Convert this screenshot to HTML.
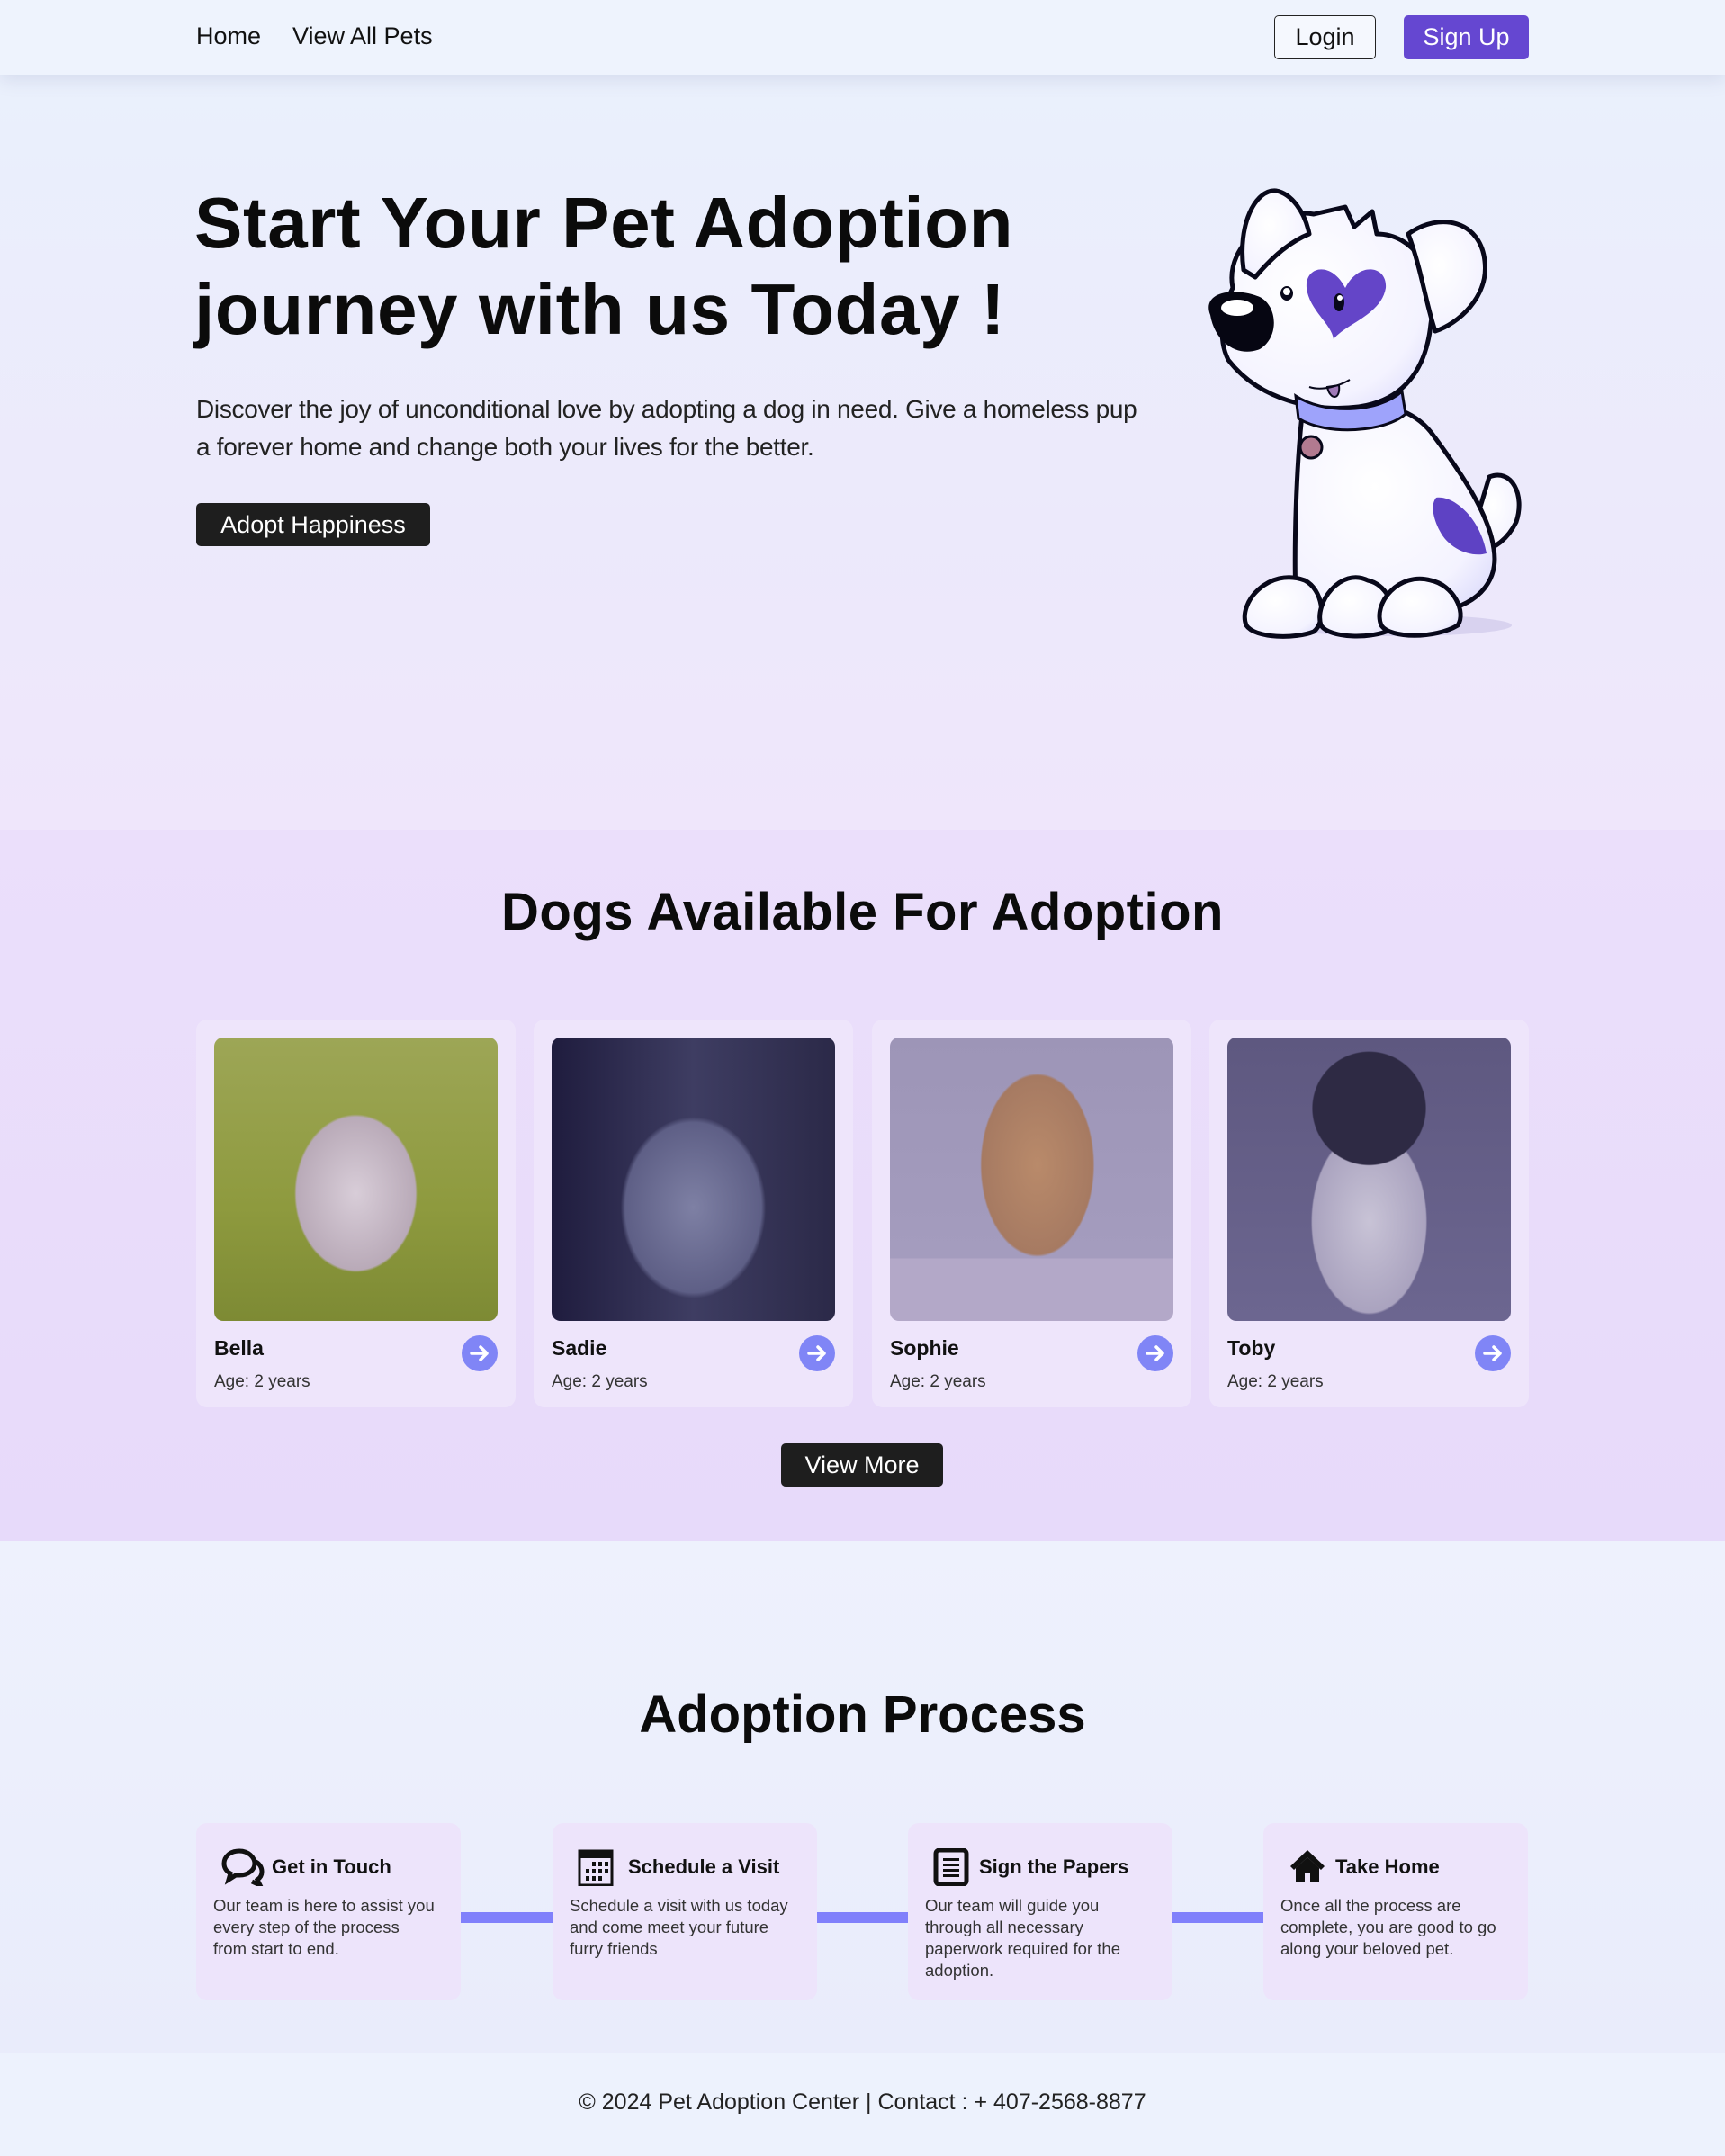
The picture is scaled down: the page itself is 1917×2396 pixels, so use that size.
<!DOCTYPE html>
<html><head><meta charset="utf-8">
<style>
*{box-sizing:border-box;margin:0;padding:0}
body{width:1917px;height:2396px;font-family:"Liberation Sans",sans-serif;color:#111;background:#ecf0fc;position:relative;overflow:hidden}
.abs{position:absolute}
nav{position:absolute;left:0;top:0;width:1917px;height:83px;background:#eef3fd;box-shadow:0 6px 18px rgba(120,130,170,.18);z-index:2}
nav a{position:absolute;top:25px;font-size:27px;color:#111;text-decoration:none}
.btn{position:absolute;border-radius:5px;font-size:27px;text-align:center}
.hero{position:absolute;left:0;top:83px;width:1917px;height:839px;background:linear-gradient(180deg,#eaf0fc 0%,#ece9fb 60%,#efe6fb 100%)}
h1{position:absolute;left:216px;top:200px;font-size:80px;line-height:96px;font-weight:bold;letter-spacing:0.6px;color:#0b0b0b}
.lead{position:absolute;left:218px;top:434px;font-size:28px;line-height:42px;color:#222;width:1060px;letter-spacing:-.3px}
.dark{background:#1e1e1e;color:#fff}
.sec2{position:absolute;left:0;top:922px;width:1917px;height:790px;background:linear-gradient(180deg,#ebdffb 0%,#e7dafa 100%)}
h2{position:absolute;width:1917px;text-align:center;font-size:58px;font-weight:bold;letter-spacing:0.5px;color:#0b0b0b}
.card{position:absolute;top:1133px;width:355px;height:431px;background:#eee5fb;border-radius:12px}
.img{position:absolute;left:20px;top:20px;width:315px;height:315px;border-radius:10px;overflow:hidden}
.name{position:absolute;left:20px;top:352px;font-size:23px;font-weight:bold}
.age{position:absolute;left:20px;top:392px;font-size:19px;color:#333}
.arr{position:absolute;left:295px;top:351px;width:40px;height:40px;border-radius:50%;background:#8085f6}
.step{position:absolute;top:2026px;width:294px;height:197px;background:#ede4fb;border-radius:12px}
.step h3{position:absolute;left:84px;top:36px;font-size:22px;font-weight:bold;color:#111}
.step p{position:absolute;left:19px;top:80px;width:246px;font-size:18.5px;line-height:24px;color:#333}
.line{position:absolute;top:2125px;height:12px;background:#8080fb}
.ic{position:absolute;left:28px;top:28px}
footer{position:absolute;left:0;top:2281px;width:1917px;height:115px;background:#edf2fd;text-align:center;font-size:25px;line-height:110px;color:#222}
</style></head><body>
<nav>
<a style="left:218px">Home</a><a style="left:325px">View All Pets</a>
<div class="btn" style="left:1416px;top:17px;width:113px;height:49px;border:1.5px solid #222;line-height:46px;color:#111;background:#f5f8fe">Login</div>
<div class="btn" style="left:1560px;top:17px;width:139px;height:49px;background:#6547d1;color:#fff;line-height:49px">Sign Up</div>
</nav>
<div class="hero"></div>
<h1>Start Your Pet Adoption<br>journey with us Today !</h1>
<div class="lead">Discover the joy of unconditional love by adopting a dog in need. Give a homeless pup a forever home and change both your lives for the better.</div>
<div class="btn dark" style="left:218px;top:559px;width:260px;height:48px;line-height:48px;font-size:27px">Adopt Happiness</div>

<svg class="abs" style="left:1300px;top:190px" width="420" height="540" viewBox="0 0 420 540">
<defs><radialGradient id="wg" cx=".4" cy=".4" r=".8"><stop offset="0" stop-color="#fff"/><stop offset=".7" stop-color="#f4f3ff"/><stop offset="1" stop-color="#d9d8fb"/></radialGradient></defs>
<ellipse cx="250" cy="505" rx="130" ry="12" fill="#c9c3e8" opacity=".6"/>
<g stroke="#08081a" stroke-width="5" stroke-linejoin="round" stroke-linecap="round" fill="url(#wg)">
<path d="M355 340 C380 330 395 360 385 390 C375 410 360 420 350 420 L340 390 Z"/>
<path d="M148 262 C140 330 138 420 140 480 L300 490 C350 480 365 450 360 420 C355 380 320 330 290 290 C270 265 240 258 200 258 Z"/>
<path d="M150 455 C110 440 75 480 85 505 C95 520 140 520 160 512 C175 500 170 465 150 455 Z"/>
<path d="M220 455 C190 440 160 480 168 505 C178 520 225 520 245 510 C255 495 245 460 220 455 Z"/>
<path d="M290 455 C255 445 225 480 235 505 C245 520 295 520 320 505 C330 490 315 460 290 455 Z"/>
<path d="M70 130 C60 80 120 40 160 48 L195 40 L205 62 L225 45 L230 70 C270 70 300 110 290 170 C285 220 260 255 210 262 C160 268 100 255 65 210 C55 190 55 160 70 130 Z"/>
<path d="M82 110 C75 60 95 20 118 22 C135 25 150 45 155 70 C130 80 110 100 95 118 Z"/>
<path d="M265 70 C300 45 345 55 350 100 C355 140 320 170 295 178 C285 150 280 110 265 70 Z"/>
</g>
<path d="M296 363 C315 360 345 385 352 425 C335 430 310 420 300 400 C292 385 290 370 296 363 Z" fill="#5e42c4"/>
<path d="M195 130 C180 100 150 105 152 130 C155 155 180 170 182 187 C195 170 235 160 240 130 C242 105 210 100 195 130 Z" fill="#6445c8"/>
<ellipse cx="188" cy="146" rx="6" ry="10" fill="#08081a"/><circle cx="189" cy="141" r="3" fill="#fff"/>
<ellipse cx="130" cy="136" rx="7" ry="8" fill="#08081a"/><circle cx="130" cy="134" r="4" fill="#fff"/>
<path d="M45 160 C35 135 70 128 100 140 C120 150 122 185 100 198 C75 208 50 190 45 160 Z" fill="#060612"/>
<ellipse cx="75" cy="152" rx="18" ry="9" fill="#fff"/>
<path d="M140 250 C170 270 230 270 258 245 L262 270 C240 290 175 295 143 275 Z" fill="#9ea3fb" stroke="#08081a" stroke-width="3"/>
<circle cx="157" cy="307" r="12" fill="#b27a90" stroke="#08081a" stroke-width="3"/>
<path d="M175 240 C178 255 190 255 188 238 Z" fill="#a07ab8" stroke="#08081a" stroke-width="2"/>
<path d="M155 240 C170 245 190 238 200 232" fill="none" stroke="#08081a" stroke-width="2"/>
</svg>

<div class="sec2"></div>
<h2 style="top:980px">Dogs Available For Adoption</h2>

<div class="card" style="left:218px"><div class="img" style="background:radial-gradient(ellipse 35% 45% at 50% 55%,#d8cdd8 0%,#b9aab8 60%,rgba(0,0,0,0) 62%),linear-gradient(180deg,#9da656 0%,#8e9a3e 60%,#7d8a34 100%)"></div><div class="name">Bella</div><div class="age">Age: 2 years</div><div class="arr"><svg width="40" height="40"><path d="M11 20h17M21 13l7 7-7 7" stroke="#fff" stroke-width="3.5" fill="none" stroke-linecap="round" stroke-linejoin="round"/></svg></div></div>
<div class="card" style="left:593px"><div class="img" style="background:radial-gradient(ellipse 40% 50% at 50% 60%,#7e80a4 0%,#5e5f86 60%,rgba(0,0,0,0) 64%),linear-gradient(90deg,#1f1c3e,#3e3d62 50%,#2b2948)"></div><div class="name">Sadie</div><div class="age">Age: 2 years</div><div class="arr"><svg width="40" height="40"><path d="M11 20h17M21 13l7 7-7 7" stroke="#fff" stroke-width="3.5" fill="none" stroke-linecap="round" stroke-linejoin="round"/></svg></div></div>
<div class="card" style="left:969px"><div class="img" style="background:linear-gradient(180deg,rgba(0,0,0,0) 78%,#b3a8c8 78%),radial-gradient(ellipse 28% 45% at 52% 45%,#b98a6a 0%,#a67a62 70%,rgba(0,0,0,0) 72%),linear-gradient(180deg,#9d95b7,#a69ec0)"></div><div class="name">Sophie</div><div class="age">Age: 2 years</div><div class="arr"><svg width="40" height="40"><path d="M11 20h17M21 13l7 7-7 7" stroke="#fff" stroke-width="3.5" fill="none" stroke-linecap="round" stroke-linejoin="round"/></svg></div></div>
<div class="card" style="left:1344px"><div class="img" style="background:radial-gradient(ellipse 22% 22% at 50% 25%,#2e2a44 0%,#2e2a44 90%,rgba(0,0,0,0) 92%),radial-gradient(ellipse 25% 40% at 50% 65%,#c8c3d6 0%,#aaa3bf 80%,rgba(0,0,0,0) 82%),linear-gradient(180deg,#5e5880,#6c6690)"></div><div class="name">Toby</div><div class="age">Age: 2 years</div><div class="arr"><svg width="40" height="40"><path d="M11 20h17M21 13l7 7-7 7" stroke="#fff" stroke-width="3.5" fill="none" stroke-linecap="round" stroke-linejoin="round"/></svg></div></div>

<div class="btn dark" style="left:868px;top:1604px;width:180px;height:48px;line-height:48px;font-size:27px">View More</div>

<div class="abs" style="left:0;top:1712px;width:1917px;height:569px;background:linear-gradient(180deg,#eef1fd,#e9ecfb)"></div>
<h2 style="top:1872px;letter-spacing:0">Adoption Process</h2>

<div class="line" style="left:512px;width:106px"></div>
<div class="line" style="left:908px;width:106px"></div>
<div class="line" style="left:1303px;width:106px"></div>

<div class="step" style="left:218px">
<svg class="ic" width="48" height="42" viewBox="0 0 48 42"><path d="M20 3C10 3 3 9 3 17c0 5 3 9 7 11l-2 7 8-5h4c10 0 17-6 17-13S30 3 20 3z" fill="none" stroke="#111" stroke-width="5"/><path d="M36 14c6 2 9 7 9 12 0 4-2 7-5 9l3 6-9-4" fill="none" stroke="#111" stroke-width="5"/></svg>
<h3>Get in Touch</h3><p>Our team is here to assist you every step of the process from start to end.</p></div>
<div class="step" style="left:614px">
<svg class="ic" width="40" height="42" viewBox="0 0 40 42"><rect x="2" y="3" width="36" height="38" fill="none" stroke="#111" stroke-width="3"/><rect x="2" y="3" width="36" height="8" fill="#111"/><g fill="#111"><rect x="16" y="15" width="4" height="5"/><rect x="23" y="15" width="4" height="5"/><rect x="30" y="15" width="4" height="5"/><rect x="9" y="23" width="4" height="5"/><rect x="16" y="23" width="4" height="5"/><rect x="23" y="23" width="4" height="5"/><rect x="30" y="23" width="4" height="5"/><rect x="9" y="31" width="4" height="5"/><rect x="16" y="31" width="4" height="5"/><rect x="23" y="31" width="4" height="5"/></g></svg>
<h3>Schedule a Visit</h3><p>Schedule a visit with us today and come meet your future furry friends</p></div>
<div class="step" style="left:1009px">
<svg class="ic" width="40" height="42" viewBox="0 0 40 42"><rect x="3" y="2" width="34" height="38" rx="4" fill="none" stroke="#111" stroke-width="5"/><g fill="#111"><rect x="11" y="11" width="18" height="3"/><rect x="11" y="17" width="18" height="3"/><rect x="11" y="23" width="18" height="3"/><rect x="11" y="29" width="18" height="3"/></g></svg>
<h3 style="left:79px">Sign the Papers</h3><p>Our team will guide you through all necessary paperwork required for the adoption.</p></div>
<div class="step" style="left:1404px">
<svg class="ic" width="42" height="38" viewBox="0 0 42 38"><path d="M21 2L2 20l4 4L21 10l15 14 4-4z" fill="#111"/><path d="M8 22v15h10V27h6v10h10V22L21 10z" fill="#111"/></svg>
<h3 style="left:80px">Take Home</h3><p>Once all the process are complete, you are good to go along your beloved pet.</p></div>

<footer>© 2024 Pet Adoption Center | Contact : + 407-2568-8877</footer>
</body></html>
